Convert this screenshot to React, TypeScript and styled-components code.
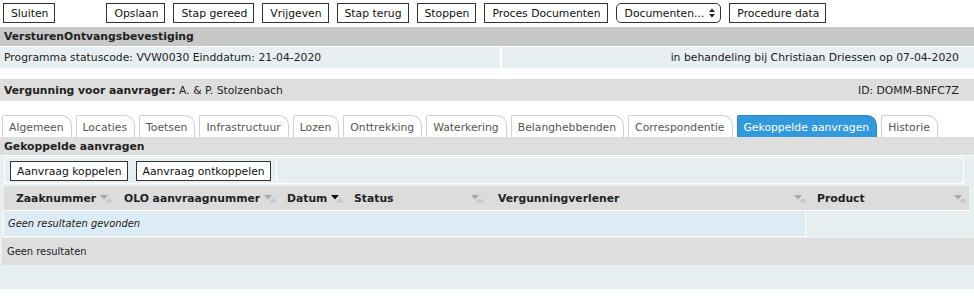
import React from "react";
import styled, { createGlobalStyle } from "styled-components";

const Global = createGlobalStyle`
  html, body { margin: 0; padding: 0; background: #fff; }
  body { font-family: "DejaVu Sans", Verdana, sans-serif; font-size: 10.8px; color: #222; }
`;

const Page = styled.div`
  width: 974px;
  display: flex;
  flex-direction: column;
`;

const Toolbar = styled.div`
  display: flex;
  align-items: center;
  gap: 8px;
  padding: 3px 3px 4px 3px;
  height: 20px;
`;

const Btn = styled.div<{ $gapLeft?: number }>`
  height: 18px;
  border: 1px solid #333;
  background: #fff;
  padding: 0 6px 0 7px;
  display: flex;
  align-items: center;
  color: #111;
  margin-left: ${(p) => p.$gapLeft ?? 0}px;
  white-space: nowrap;
`;

const SelectBox = styled(Btn)`
  border-radius: 5px;
  gap: 5px;
  padding: 0 5px 0 8px;
`;

const HeaderBar = styled.div`
  height: 19px;
  background: #c8c8c8;
  display: flex;
  align-items: center;
  padding-left: 4px;
  font-weight: bold;
  color: #222;
`;

const InfoRow = styled.div`
  margin-top: 1px;
  height: 21px;
  display: flex;
  gap: 2px;
`;

const InfoCell = styled.div<{ $right?: boolean }>`
  background: #e7eff2;
  display: flex;
  align-items: center;
  padding: 0 ${(p) => (p.$right ? "15px" : "4px")};
  justify-content: ${(p) => (p.$right ? "flex-end" : "flex-start")};
  flex: ${(p) => (p.$right ? "1" : "0 0 492px")};
`;

const OwnerBar = styled.div`
  margin-top: 11px;
  height: 22px;
  background: #dedede;
  display: flex;
  align-items: center;
  justify-content: space-between;
  padding: 0 15px 0 4px;
`;

const Tabs = styled.div`
  margin-top: 13px;
  height: 23px;
  display: flex;
  align-items: flex-end;
  gap: 4px;
  padding-left: 2px;
`;

const Tab = styled.div<{ $active?: boolean }>`
  height: 22px;
  box-sizing: border-box;
  padding: 2px 7px 0 6px;
  display: flex;
  align-items: center;
  border: 1px solid ${(p) => (p.$active ? "#2a86c6" : "#cfcfcf")};
  border-bottom: none;
  border-radius: 2px 10px 0 0;
  background: ${(p) => (p.$active ? "#3399dd" : "#fff")};
  color: ${(p) => (p.$active ? "#fff" : "#555")};
  white-space: nowrap;
`;

const SectionBar = styled.div`
  height: 18px;
  background: #dedede;
  display: flex;
  align-items: center;
  padding-left: 4px;
  font-weight: bold;
  color: #222;
`;

const Panel = styled.div`
  background: #e7eff2;
  border-top: 1px solid #fff;
  padding: 1px 0 24px 0;
  display: flex;
  flex-direction: column;
`;

const PanelToolbar = styled.div`
  margin: 0 4px 0 4px;
  display: flex;
  height: 27px;
`;

const PanelToolbarCell = styled.div<{ $fill?: boolean }>`
  border: 1px solid #fff;
  border-left: ${(p) => (p.$fill ? "none" : "1px solid #fff")};
  display: flex;
  align-items: center;
  gap: 8px;
  padding: 1px 5px 0 5px;
  flex: ${(p) => (p.$fill ? "1" : "0 0 auto")};
  margin-right: ${(p) => (p.$fill ? "6px" : "0")};
`;

const SmallBtn = styled(Btn)`
  height: 18px;
  padding: 0 5px 0 6px;
`;

const HeadRow = styled.div`
  margin: 2px 5px 0 4px;
  height: 24px;
  background: #dcdcdc;
  display: flex;
  border-bottom: 1px solid #fff;
`;

const HeadCell = styled.div<{ $w: number; $pl: number }>`
  width: ${(p) => p.$w}px;
  box-sizing: border-box;
  padding: 0 2px 0 ${(p) => p.$pl}px;
  display: flex;
  align-items: center;
  justify-content: space-between;
  font-weight: bold;
  color: #222;
  white-space: nowrap;
  svg { flex-shrink: 0; }
`;

const HeadCellTight = styled(HeadCell)`
  justify-content: flex-start;
  gap: 4px;
`;

const EmptyRow = styled.div`
  margin-left: 3px;
  width: 803px;
  height: 26px;
  box-sizing: border-box;
  border: 1px solid #fff;
  border-top: none;
  background: #ddebf4;
  display: flex;
  align-items: center;
  padding-left: 4px;
  overflow: hidden;
`;

const NarrowText = styled.span<{ $italic?: boolean }>`
  font-family: "DejaVu Sans Condensed", "DejaVu Sans", sans-serif;
  font-stretch: condensed;
  font-size: 11px;
  font-style: ${(p) => (p.$italic ? "italic" : "normal")};
  white-space: nowrap;
  color: #222;
`;

const FooterRow = styled.div`
  margin: 1px 0 0 2px;
  height: 27px;
  background: #dedede;
  display: flex;
  align-items: center;
  padding-left: 5px;
`;

const SortIcon = ({ active }: { active?: boolean }) => (
  <svg width="13" height="9" viewBox="0 0 13 9">
    <polygon points="0,1 8,1 4,5.5" fill={active ? "#111" : "#a8a8a8"} />
    <polygon points="5,8.5 13,8.5 9,4" fill="#c8c8c8" />
  </svg>
);

const SelectArrows = () => (
  <svg width="6" height="10" viewBox="0 0 6 10">
    <polygon points="0,4 6,4 3,0.5" fill="#222" />
    <polygon points="0,6 6,6 3,9.5" fill="#222" />
  </svg>
);

const tabs = [
  "Algemeen",
  "Locaties",
  "Toetsen",
  "Infrastructuur",
  "Lozen",
  "Onttrekking",
  "Waterkering",
  "Belanghebbenden",
  "Correspondentie",
  "Gekoppelde aanvragen",
  "Historie",
];

export default function App() {
  return (
    <Page>
      <Global />
      <Toolbar>
        <Btn>Sluiten</Btn>
        <Btn $gapLeft={43}>Opslaan</Btn>
        <Btn>Stap gereed</Btn>
        <Btn>Vrijgeven</Btn>
        <Btn>Stap terug</Btn>
        <Btn>Stoppen</Btn>
        <Btn>Proces Documenten</Btn>
        <SelectBox>
          Documenten... <SelectArrows />
        </SelectBox>
        <Btn>Procedure data</Btn>
      </Toolbar>
      <HeaderBar>VersturenOntvangsbevestiging</HeaderBar>
      <InfoRow>
        <InfoCell>Programma statuscode: VVW0030 Einddatum: 21-04-2020</InfoCell>
        <InfoCell $right>in behandeling bij Christiaan Driessen op 07-04-2020</InfoCell>
      </InfoRow>
      <OwnerBar>
        <span>
          <b>Vergunning voor aanvrager:</b> A. &amp; P. Stolzenbach
        </span>
        <span>ID: DOMM-BNFC7Z</span>
      </OwnerBar>
      <Tabs>
        {tabs.map((t) => (
          <Tab key={t} $active={t === "Gekoppelde aanvragen"}>
            {t}
          </Tab>
        ))}
      </Tabs>
      <SectionBar>Gekoppelde aanvragen</SectionBar>
      <Panel>
        <PanelToolbar>
          <PanelToolbarCell>
            <SmallBtn>Aanvraag koppelen</SmallBtn>
            <SmallBtn>Aanvraag ontkoppelen</SmallBtn>
          </PanelToolbarCell>
          <PanelToolbarCell $fill />
        </PanelToolbar>
        <HeadRow>
          <HeadCellTight $w={109} $pl={12}>
            Zaaknummer <SortIcon />
          </HeadCellTight>
          <HeadCellTight $w={163} $pl={11}>
            OLO aanvraagnummer <SortIcon />
          </HeadCellTight>
          <HeadCellTight $w={64} $pl={11}>
            Datum <SortIcon active />
          </HeadCellTight>
          <HeadCell $w={146} $pl={14}>
            Status <SortIcon />
          </HeadCell>
          <HeadCell $w={323} $pl={12}>
            Vergunningverlener <SortIcon />
          </HeadCell>
          <HeadCell $w={160} $pl={8}>
            Product <SortIcon />
          </HeadCell>
        </HeadRow>
        <EmptyRow>
          <NarrowText $italic>Geen resultaten gevonden</NarrowText>
        </EmptyRow>
        <FooterRow>
          <NarrowText>Geen resultaten</NarrowText>
        </FooterRow>
      </Panel>
    </Page>
  );
}
